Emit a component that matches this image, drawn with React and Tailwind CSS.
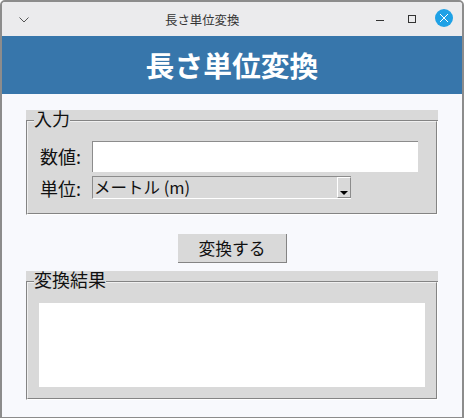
import React from 'react';

const FONT = "font-['Noto_Sans_CJK_JP','Liberation_Sans',sans-serif]";

const Group = ({ title, titleClass, children, bodyClass }) => (
  <div className="relative w-[412px]">
    <div className="h-[10px] w-[412px] bg-[#d9d9d9]" />
    <div className="h-px w-[412px] bg-[#848484]" />
    <span className={`absolute top-0 h-[19px] bg-[#d9d9d9] text-[18px] leading-[16px] text-[#111] ${titleClass}`}>{title}</span>
    {/* groove border: dark then light */}
    <div className="w-[412px] border-b border-l border-r border-b-white border-l-[#848484] border-r-white">
      <div className={`border-b border-l border-r border-t border-b-[#848484] border-l-[#f0f0f0] border-r-[#848484] border-t-[#f0f0f0] bg-[#d9d9d9] ${bodyClass}`}>
        {children}
      </div>
    </div>
  </div>
);

const App = () => {
  return (
    <div className={`${FONT} flex h-[418px] w-[464px] flex-col overflow-hidden rounded-t-[5px] border-2 border-b-[1px] border-[#8c8c8c] bg-[#f8f9fd]`}>
      {/* title bar */}
      <div className="flex h-[34px] shrink-0 items-center bg-[#ebebed]">
        <svg className="ml-[16px] mt-[1px] shrink-0" width="12" height="8" viewBox="0 0 12 8" fill="none" stroke="#444" strokeWidth="0.9">
          <path d="M1.5 1.5 L6 6 L10.5 1.5" />
        </svg>
        <div className="ml-[135px] mt-[1px] w-[80px] shrink-0 whitespace-nowrap text-[12.4px] leading-[16px] text-[#333]">長さ単位変換</div>
        <div className="ml-[131px] mt-[3px] h-[1.5px] w-[8px] shrink-0 bg-[#333]" />
        <div className="mb-[1px] ml-[24px] h-[8px] w-[8px] shrink-0 border border-[#333]" />
        <div className="mb-[2px] ml-[19px] flex h-[18px] w-[18px] shrink-0 items-center justify-center rounded-full bg-[#1ea1e6]">
          <svg width="10" height="10" viewBox="0 0 10 10" fill="none" stroke="#fff" strokeWidth="1">
            <path d="M1 1 L9 9 M9 1 L1 9" />
          </svg>
        </div>
      </div>

      {/* header */}
      <div className="flex h-[58px] shrink-0 items-center justify-center bg-[#3776ab] text-[28.8px] font-bold text-white">
        長さ単位変換
      </div>

      <div className="flex flex-col pl-[24px] pt-[16px]">
        <Group title="入力" titleClass="left-[8px]" bodyClass="h-[93px] pl-[12px] pt-[19px]">
          <div className="flex items-center">
            <span className="mb-[1px] w-[52px] text-[18px] leading-[22px] text-[#111]">数値:</span>
            <div className="h-[31px] w-[326px] border-l border-t border-[#8c8c8c] bg-white" />
          </div>
          <div className="mt-[4px] flex items-center">
            <span className="w-[52px] text-[18px] leading-[22px] text-[#111]">単位:</span>
            <div className="flex h-[23px] w-[259px] items-stretch justify-between border-b border-l border-t border-[#8c8c8c] border-b-white">
              <span className="pl-px text-[16.5px] leading-[20px] text-[#111]">メートル (m)</span>
              <div className="flex w-[14px] items-end justify-center border-b border-l border-r border-t border-b-[#8c8c8c] border-l-white border-r-[#8c8c8c] border-t-white pb-[2px]">
                <svg width="8" height="4" viewBox="0 0 8 4"><path d="M0 0 H8 L4 4 Z" fill="#000" /></svg>
              </div>
            </div>
          </div>
        </Group>

        <button className="ml-[152px] mt-[19px] h-[29px] w-[109px] border-b border-r border-[#848484] bg-[#d9d9d9] text-[16.8px] leading-[22px] text-[#111]">
          変換する
        </button>

        <div className="mt-[8px]">
          <Group title="変換結果" titleClass="left-[8px]" bodyClass="h-[117px] pl-[11px] pt-[20px]">
            <div className="h-[84px] w-[386px] bg-white" />
          </Group>
        </div>
      </div>
    </div>
  );
};

export default App;
